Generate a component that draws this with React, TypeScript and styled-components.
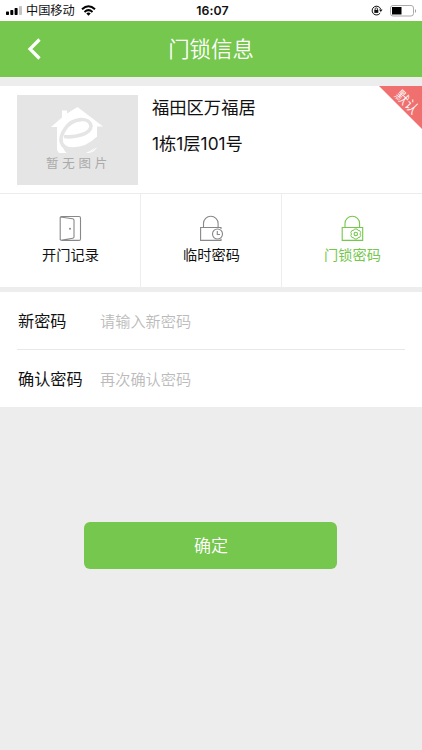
import React from 'react';
import styled, { createGlobalStyle } from 'styled-components';

const green = '#76c74d';

const GlobalStyle = createGlobalStyle`
  * { box-sizing: border-box; }
  body { margin: 0; background: #ededed; font-family: Inter, "Noto Sans CJK SC", sans-serif; color: #111; }
  svg { display: block; }
`;

const Screen = styled.div`
  width: 100%;
  height: 750px;
  overflow: hidden;
  background: #ededed;
`;

const StatusBar = styled.div`
  height: 21px;
  padding: 0 5px 0 6px;
  display: grid;
  grid-template-columns: 1fr auto 1fr;
  align-items: center;
  background: #fff;
`;

const Carrier = styled.div`
  display: flex;
  align-items: center;
  font-size: 12.2px;
  line-height: 20px;
  span { margin: 1px 6px 0 4px; }
`;

const Clock = styled.time`
  font-size: 12.3px;
  font-weight: 600;
  letter-spacing: 0.15px;
  padding-left: 2px;
`;

const Power = styled.div`
  display: flex;
  justify-content: flex-end;
  align-items: center;
  gap: 7px;
`;

const Header = styled.header`
  height: 56px;
  display: grid;
  grid-template-columns: 70px 1fr 70px;
  align-items: center;
  background: ${green};
  color: #fff;
`;

const Back = styled.button`
  border: 0;
  padding: 0 0 0 27px;
  background: none;
`;

const Title = styled.h1`
  margin: 0;
  text-align: center;
  font-size: 21.4px;
  line-height: 56px;
  height: 56px;
  font-weight: 350;
`;

const LockCard = styled.section`
  position: relative;
  height: 108px;
  margin-top: 9px;
  padding: 9px 17px;
  display: flex;
  gap: 14px;
  overflow: hidden;
  background: #fff;
  border-bottom: 1px solid #ececec;
`;

const Thumb = styled.div`
  width: 121px;
  height: 90px;
  padding-top: 12px;
  display: flex;
  flex-direction: column;
  align-items: center;
  background: #e5e5e5;
  color: #aaa;
  font-size: 12.5px;
  line-height: 18px;
  letter-spacing: 3.7px;
  svg { margin-right: 1px; }
  span { margin: 1px 0 0 2px; }
`;

const Address = styled.div`
  font-size: 17.3px;
  line-height: 36px;
  margin-top: -5px;
  white-space: nowrap;
`;

const Ribbon = styled.div`
  position: absolute;
  top: 0;
  right: 0;
  width: 43px;
  height: 43px;
  clip-path: polygon(0 0, 100% 0, 100% 100%);
  background: #f07070;
  color: #fff;
  span {
    position: absolute;
    left: 12px;
    top: 6px;
    width: 32px;
    text-align: center;
    font-size: 13.5px;
    line-height: 20px;
    font-weight: 350;
    transform: rotate(45deg);
  }
`;

const Tabs = styled.nav`
  height: 93px;
  display: grid;
  grid-template-columns: 141px 141px 1fr;
  background: #fff;
`;

const Tab = styled.div<{ $active?: boolean }>`
  display: flex;
  flex-direction: column;
  align-items: center;
  padding: 21px 0 0 1px;
  border-right: 1px solid #eee;
  font-size: 14.2px;
  line-height: 22px;
  color: ${p => (p.$active ? green : '#111')};
  svg { color: ${p => (p.$active ? green : '#888')}; margin-bottom: 2px; }
  &:last-child { border-right: 0; }
`;

const Form = styled.form`
  height: 115px;
  margin: 5px 0 0;
  padding: 0 17px;
  background: #fff;
`;

const Field = styled.label`
  height: 57px;
  padding-left: 1px;
  display: grid;
  grid-template-columns: 82px 1fr;
  align-items: center;
  font-size: 16.2px;
  &:first-child { height: 58px; border-bottom: 1px solid #e8e8e8; }
`;

const Label = styled.span`
  padding-bottom: 2px;
`;

const Input = styled.input`
  width: 100%;
  border: 0;
  outline: 0;
  padding: 1px 0 0;
  background: none;
  font: 350 15.2px Inter, "Noto Sans CJK SC", sans-serif;
  &::placeholder { color: #bbb; opacity: 1; }
`;

const Submit = styled.button`
  display: block;
  width: 253px;
  height: 47px;
  margin: 115px 0 0 84.4px;
  padding: 0 0 2px;
  border: 0;
  border-radius: 6px;
  background: ${green};
  color: #fff;
  font: 350 17px Inter, "Noto Sans CJK SC", sans-serif;
`;

const Signal = () => (
  <svg width="16" height="9" viewBox="0 0 16 9">
    <rect x="0" y="5.5" width="3" height="3.5" rx=".7" />
    <rect x="4.3" y="4" width="3" height="5" rx=".7" />
    <rect x="8.6" y="2" width="3" height="7" rx=".7" />
    <rect x="13" y="0" width="3" height="9" rx=".7" fill="#c4c4c4" />
  </svg>
);

const Wifi = () => (
  <svg width="15" height="11" viewBox="0 0 15 11" fill="none" stroke="#000" strokeWidth="2">
    <path d="M1 4.3Q7.5-1.7 14 4.3M3.5 6.9q4-3.5 8 0" />
    <path d="M5.3 8.5q2.2-1.8 4.4 0L7.5 10.8Z" fill="#000" stroke="none" />
  </svg>
);

const RotationLock = () => (
  <svg width="12" height="11" viewBox="0 0 12 11" fill="none" stroke="#111">
    <path d="M9.2 8A4.4 4.4 0 1 1 9.7 4.2" strokeWidth="1" />
    <path d="M8 4.5h3.5L9.8 7Z" fill="#111" stroke="none" />
    <rect x="3.3" y="4.9" width="4" height="3" fill="#111" stroke="none" />
    <path d="M4.1 5V4a1.2 1.2 0 0 1 2.4 0v1" strokeWidth=".8" />
  </svg>
);

const Battery = () => (
  <svg width="27" height="12" viewBox="0 0 27 12">
    <rect x=".5" y=".5" width="23" height="10.5" rx="2.5" fill="#fff" stroke="#aaa" />
    <rect x="2" y="2" width="9.5" height="7.5" fill="#000" />
    <path d="M25 4q2 2 0 4Z" fill="#999" />
  </svg>
);

const House = () => (
  <svg width="52" height="47" viewBox="0 0 52 47">
    <path fill="#fff" d="M0 20 11 10.5V3.5H16V6.5L26.5 0 52 19.5H46V35Q44 43 38 46H8L6 43V20Z" />
    <path fill="none" stroke="#e5e5e5" strokeWidth="3.6" d="M13 29.5C24 31 40 27 40 19C39 10 22 10 14 22C7 32 9 42 22 42Q36 42 47 31" />
    <path fill="#e5e5e5" d="M12 38Q19 45 32 41Q41 38 47 30V38Q40 45 31 47H17Q12 44 12 38Z" />
    <path fill="#fff" d="M46 40Q44 45 38 46Q42 44 46 40Z" />
  </svg>
);

const DoorIcon = () => (
  <svg width="23" height="27" viewBox="0 0 23 27" fill="none" stroke="currentColor" strokeWidth="1.1">
    <path d="M1.2 25V2.5Q1.2 1.5 2.5 1.5H20Q21.5 1.5 21.5 3V24Q21.5 25.4 20 25.4H3Q1.2 25.4 1.2 24M1.5 2 13.5 3.8Q15 4 15 5.2V22Q15 23 13.7 23.2L1.8 25.2" />
    <circle cx="11" cy="13.8" r="1" fill="currentColor" stroke="none" />
  </svg>
);

const TempLockIcon = () => (
  <svg width="24" height="27" viewBox="0 0 24 27" fill="none" stroke="currentColor" strokeWidth="1.1">
    <path d="M3.5 12.5V8.5a7.3 7.3 0 0 1 14.6 0V12.5M21 14V12.5H.6V25.4H21V23.8" />
    <circle cx="17.5" cy="19" r="5" />
    <path d="M17.3 16v3.5H20" />
  </svg>
);

const LockGearIcon = () => (
  <svg width="23" height="27" viewBox="0 0 23 27" fill="none" stroke="currentColor" strokeWidth="1.1">
    <path d="M4 12.5V8.5a7.3 7.3 0 0 1 14.6 0V12.5M1.2 12.5H21.7V25.4H1.2Z" />
    <path d="M10.9 15.5 12.6 15.3 13.5 14H16L16.9 15.3 18.6 15.5 19.7 17.5 19 19 19.7 20.5 18.6 22.5 16.9 22.7 16 24H13.5L12.6 22.7 10.9 22.5 9.8 20.5 10.5 19 9.8 17.5Z" strokeWidth="1" />
    <circle cx="14.8" cy="19" r="1.7" />
  </svg>
);

export default function App() {
  return (
    <Screen>
      <GlobalStyle />
      <StatusBar>
        <Carrier><Signal /><span>中国移动</span><Wifi /></Carrier>
        <Clock>16:07</Clock>
        <Power><RotationLock /><Battery /></Power>
      </StatusBar>
      <Header>
        <Back aria-label="返回">
          <svg width="14" height="22" viewBox="0 0 14 22" fill="none" stroke="#fff" strokeWidth="3.2">
            <path d="M12.5 1.5 3 11 12.5 20.5" />
          </svg>
        </Back>
        <Title>门锁信息</Title>
      </Header>
      <LockCard>
        <Thumb><House /><span>暂无图片</span></Thumb>
        <Address>
          <div>福田区万福居</div>
          <div>1栋1层101号</div>
        </Address>
        <Ribbon><span>默认</span></Ribbon>
      </LockCard>
      <Tabs>
        <Tab><DoorIcon />开门记录</Tab>
        <Tab><TempLockIcon />临时密码</Tab>
        <Tab $active><LockGearIcon />门锁密码</Tab>
      </Tabs>
      <Form>
        <Field><Label>新密码</Label><Input type="password" placeholder="请输入新密码" /></Field>
        <Field><Label>确认密码</Label><Input type="password" placeholder="再次确认密码" /></Field>
      </Form>
      <Submit type="button">确定</Submit>
    </Screen>
  );
}
